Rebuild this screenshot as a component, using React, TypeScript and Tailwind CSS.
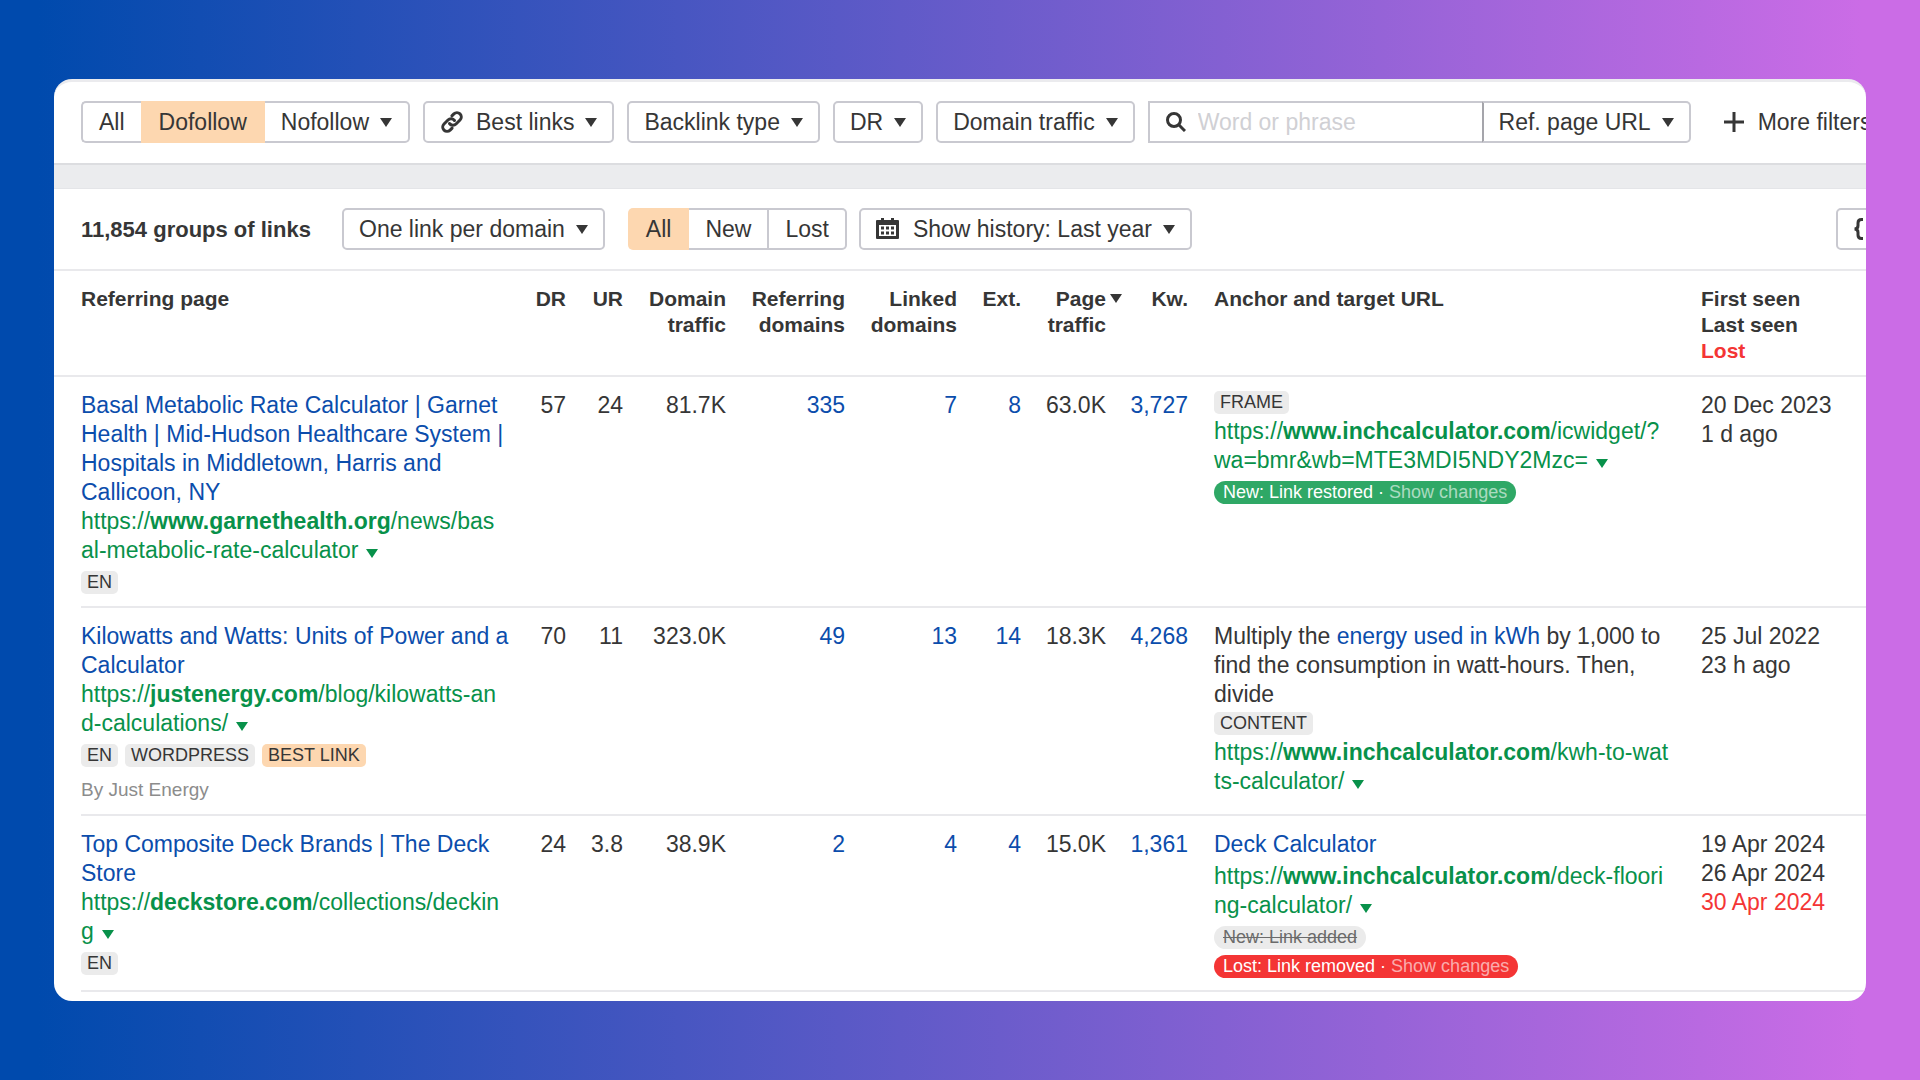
import type { ReactNode } from "react";
import clsx from "clsx";

const box = "flex h-[42px] shrink-0 items-center border-2 border-[#c9c9d0] bg-white whitespace-nowrap";
const button = `${box} rounded-[5px] px-[15px]`;
const segment = `${box} px-4`;
const activeSegment = "flex h-[42px] items-center bg-[#fdd7b0]";

type Row = {
  title: ReactNode;
  url: ReactNode;
  tags: { label: string; best?: boolean }[];
  author?: string;
  numbers: string[];
  anchor: ReactNode;
  dates: string[];
  lost?: string;
};

const rows: Row[] = [
  {
    title: (
      <>
        Basal Metabolic Rate Calculator | Garnet
        <br />
        Health | Mid-Hudson Healthcare System |
        <br />
        Hospitals in Middletown, Harris and
        <br />
        Callicoon, NY
      </>
    ),
    url: (
      <>
        https://<b>www.garnethealth.org</b>/news/bas
        <br />
        al-metabolic-rate-calculator
      </>
    ),
    tags: [{ label: "EN" }],
    numbers: ["57", "24", "81.7K", "335", "7", "8", "63.0K", "3,727"],
    anchor: (
      <>
        <div className="flex pb-[3px]">
          <Tag>FRAME</Tag>
        </div>
        <Url>
          https://<b>www.inchcalculator.com</b>/icwidget/?
          <br />
          wa=bmr&amp;wb=MTE3MDI5NDY2Mzc=
        </Url>
        <Status className="bg-[#2fa866] text-white">
          New: Link restored <ShowChanges />
        </Status>
      </>
    ),
    dates: ["20 Dec 2023", "1 d ago"],
  },
  {
    title: (
      <>
        Kilowatts and Watts: Units of Power and a
        <br />
        Calculator
      </>
    ),
    url: (
      <>
        https://<b>justenergy.com</b>/blog/kilowatts-an
        <br />
        d-calculations/
      </>
    ),
    tags: [{ label: "EN" }, { label: "WORDPRESS" }, { label: "BEST LINK", best: true }],
    author: "By Just Energy",
    numbers: ["70", "11", "323.0K", "49", "13", "14", "18.3K", "4,268"],
    anchor: (
      <>
        <p>
          Multiply the{" "}
          <a href="#anchor" className="text-[#0b4dac]">
            energy used in kWh
          </a>{" "}
          by 1,000 to
          <br />
          find the consumption in watt-hours. Then,
          <br />
          divide
        </p>
        <div className="flex py-[3px]">
          <Tag>CONTENT</Tag>
        </div>
        <Url>
          https://<b>www.inchcalculator.com</b>/kwh-to-wat
          <br />
          ts-calculator/
        </Url>
      </>
    ),
    dates: ["25 Jul 2022", "23 h ago"],
  },
  {
    title: (
      <>
        Top Composite Deck Brands | The Deck
        <br />
        Store
      </>
    ),
    url: (
      <>
        https://<b>deckstore.com</b>/collections/deckin
        <br />g
      </>
    ),
    tags: [{ label: "EN" }],
    numbers: ["24", "3.8", "38.9K", "2", "4", "4", "15.0K", "1,361"],
    anchor: (
      <>
        <a href="#anchor" className="block pb-[3px] text-[#0b4dac]">
          Deck Calculator
        </a>
        <Url>
          https://<b>www.inchcalculator.com</b>/deck-floori
          <br />
          ng-calculator/
        </Url>
        <Status className="bg-[#ebebeb] text-[#6b6b6b] line-through">New: Link added</Status>
        <Status className="bg-[#f43535] text-white">
          Lost: Link removed <ShowChanges />
        </Status>
      </>
    ),
    dates: ["19 Apr 2024", "26 Apr 2024"],
    lost: "30 Apr 2024",
  },
];

// Ref. domains, linked domains, ext. and kw. open a report of their own
const linkedColumns = [3, 4, 5, 7];

export default function App() {
  return (
    <div className="min-h-screen bg-linear-to-r/srgb from-[#004aad] from-2% to-[#cb6ce6] to-97% px-[54px] py-[79px] font-['Liberation_Sans',Arial,sans-serif] text-[23px] leading-[29px] text-[#363636]">
      <main className="overflow-hidden rounded-[18px] border-t-[3px] border-[#ebebee] bg-white">
        <Filters />
        <div className="h-[26px] border-t-2 border-b border-t-[#dcdde0] border-b-[#e4e5e8] bg-[#ebecee]" />
        <Toolbar />
        <BacklinksTable />
      </main>
    </div>
  );
}

function Filters() {
  return (
    <div className="flex gap-[13px] pt-[19px] pb-5 pl-[27px]">
      <div className="flex shrink-0">
        <button className={clsx(segment, "rounded-l-[5px] border-r-0")}>All</button>
        <button className={clsx(activeSegment, "px-[18px]")}>Dofollow</button>
        <button className={clsx(segment, "rounded-r-[5px] border-l-0")}>
          Nofollow
          <Caret />
        </button>
      </div>
      <button className={button}>
        <LinkIcon />
        Best links
        <Caret />
      </button>
      <button className={button}>
        Backlink type
        <Caret />
      </button>
      <button className={button}>
        DR
        <Caret />
      </button>
      <button className={button}>
        Domain traffic
        <Caret />
      </button>
      <div className="flex w-[543px] shrink-0">
        <label className="flex h-[42px] min-w-0 flex-1 items-center gap-3 border-2 border-r-0 border-[#c9c9d0] pl-4">
          <SearchIcon />
          <input
            type="text"
            aria-label="Word or phrase"
            placeholder="Word or phrase"
            className="w-full min-w-0 outline-none placeholder:text-[#d0d0d4]"
          />
        </label>
        <button className={clsx(box, "rounded-r-[5px] border-l-[#a5a5ab] px-[15px]")}>
          Ref. page URL
          <Caret />
        </button>
      </div>
      <button className="ml-5 flex shrink-0 items-center gap-[14px] whitespace-nowrap">
        <svg viewBox="0 0 20 20" className="size-5" stroke="#363636" strokeWidth="3">
          <path d="M10 0v20M0 10h20" />
        </svg>
        More filters
      </button>
    </div>
  );
}

function Toolbar() {
  return (
    <div className="flex items-center border-b-2 border-[#e9e9ec] py-[19px] pl-[27px]">
      <h1 className="w-[261px] shrink-0 text-[22px] font-bold whitespace-nowrap">11,854 groups of links</h1>
      <button className={button}>
        One link per domain
        <Caret />
      </button>
      <div className="ml-[23px] flex shrink-0">
        <button className={clsx(activeSegment, "rounded-l-[5px] px-[18px]")}>All</button>
        <button className={clsx(segment, "border-l-0")}>New</button>
        <button className={clsx(segment, "rounded-r-[5px] border-l-0")}>Lost</button>
      </div>
      <button className={clsx(button, "ml-3")}>
        <CalendarIcon />
        Show history: Last year
        <Caret />
      </button>
      <button aria-label="API" className={clsx(button, "-mr-10 ml-auto w-[70px]")}>
        <BracesIcon />
      </button>
    </div>
  );
}

function BacklinksTable() {
  return (
    <table className="mb-[9px] w-full table-fixed">
      <colgroup>
        <col className="w-[27px]" />
        <col className="w-[427px]" />
        <col className="w-[58px]" />
        <col className="w-[57px]" />
        <col className="w-[103px]" />
        <col className="w-[119px]" />
        <col className="w-[112px]" />
        <col className="w-[64px]" />
        <col className="w-[85px]" />
        <col className="w-[82px]" />
        <col className="w-[513px]" />
        <col />
      </colgroup>
      <thead>
        <tr className="border-b-2 border-[#e9e9ec] text-right align-top text-[21px] leading-[26px] *:pt-[15px] *:pb-[11px]">
          <td />
          <th scope="col" className="text-left">
            Referring page
          </th>
          <th scope="col">DR</th>
          <th scope="col">UR</th>
          <th scope="col">
            Domain
            <br />
            traffic
          </th>
          <th scope="col">
            Referring
            <br />
            domains
          </th>
          <th scope="col">
            Linked
            <br />
            domains
          </th>
          <th scope="col">Ext.</th>
          <th scope="col" aria-sort="descending">
            <button className="relative text-right font-bold">
              Page
              <br />
              traffic
              <span className="absolute top-2 left-full ml-1 border-x-[6px] border-t-[9px] border-x-transparent border-t-[#363636]" />
            </button>
          </th>
          <th scope="col">Kw.</th>
          <th scope="col" className="pl-[26px] text-left">
            Anchor and target URL
          </th>
          <th scope="col" className="text-left">
            First seen
            <br />
            Last seen
            <br />
            <span className="text-[#f43535]">Lost</span>
          </th>
        </tr>
      </thead>
      <tbody>
        {rows.map((row, i) => (
          <tr key={i} className="align-top *:pt-[14px] *:pb-3 *:not-first:border-b-2 *:not-first:border-[#e9e9ec]">
            <td />
            <td className="whitespace-nowrap">
              <a href="#page" className="block text-[#0b4dac]">
                {row.title}
              </a>
              <Url>{row.url}</Url>
              <div className="flex gap-[7px] pt-[6px]">
                {row.tags.map((tag) => (
                  <Tag key={tag.label} best={tag.best}>
                    {tag.label}
                  </Tag>
                ))}
              </div>
              {row.author && <p className="pt-[11px] text-[19px] leading-6 text-[#8c8c8c]">{row.author}</p>}
            </td>
            {row.numbers.map((value, n) => (
              <td key={n} className="text-right">
                {linkedColumns.includes(n) ? (
                  <a href="#report" className="text-[#0b4dac]">
                    {value}
                  </a>
                ) : (
                  value
                )}
              </td>
            ))}
            <td className="pl-[26px] whitespace-nowrap">{row.anchor}</td>
            <td className="whitespace-nowrap">
              {row.dates.map((date) => (
                <div key={date}>{date}</div>
              ))}
              {row.lost && <div className="text-[#f43535]">{row.lost}</div>}
            </td>
          </tr>
        ))}
      </tbody>
    </table>
  );
}

function Url({ children }: { children: ReactNode }) {
  return (
    <a href="#url" className="block text-[#08914a]">
      {children}
      <span className="ml-2 inline-block border-x-[6px] border-t-[9px] border-x-transparent border-t-[#08914a]" />
    </a>
  );
}

function Tag({ children, best }: { children: ReactNode; best?: boolean }) {
  return (
    <span className={clsx("rounded-[5px] px-[6px] text-[18px] leading-[23px]", best ? "bg-[#fdd7b0]" : "bg-[#ebebeb]")}>
      {children}
    </span>
  );
}

function Status({ children, className }: { children: ReactNode; className: string }) {
  return (
    <div className="flex pt-[6px]">
      <span className={clsx("rounded-full px-[9px] text-[18px] leading-[23px]", className)}>{children}</span>
    </div>
  );
}

function ShowChanges() {
  return (
    <>
      ·{" "}
      <a href="#changes" className="text-white/60">
        Show changes
      </a>
    </>
  );
}

function Caret() {
  return <span className="ml-[11px] border-x-[6px] border-t-[9px] border-x-transparent border-t-[#363636]" />;
}

function LinkIcon() {
  return (
    <svg
      viewBox="0 0 24 24"
      className="mr-3 size-6"
      fill="none"
      stroke="#363636"
      strokeWidth="3"
      strokeLinecap="round"
      strokeLinejoin="round"
    >
      <path d="M9.500 13.500a4.300 4.300 0 0 0 6.500.5l4-4a4.300 4.300 0 0 0-6.100-6.100l-2 2" />
      <path d="M14.500 10.500a4.300 4.300 0 0 0-6.500-.5l-4 4a4.300 4.300 0 0 0 6.100 6.100l2-2" />
    </svg>
  );
}

function SearchIcon() {
  return (
    <svg viewBox="0 0 20 20" className="size-5 shrink-0" fill="none" stroke="#363636" strokeWidth="3">
      <circle cx="8" cy="8" r="6.5" />
      <path d="M13 13l6 6" />
    </svg>
  );
}

function CalendarIcon() {
  return (
    <svg viewBox="0 0 23 22" className="mr-[14px] h-[22px] w-[23px]" fill="#363636">
      <path
        fillRule="evenodd"
        d="M5 0h3v2h7V0h3v2h4a1 1 0 0 1 1 1v17a1 1 0 0 1-1 1H1a1 1 0 0 1-1-1V3a1 1 0 0 1 1-1h4zM3 7v11h17V7z"
      />
      <path d="M5 8.500h3v3H5zM10 8.500h3v3h-3zM15 8.500h3v3h-3zM5 13.500h3v3H5zM10 13.500h3v3h-3zM15 13.500h3v3h-3z" />
    </svg>
  );
}

function BracesIcon() {
  return (
    <svg viewBox="0 0 28 22" className="h-[22px] w-7" fill="none" stroke="#363636" strokeWidth="3">
      <path d="M10 1.500H8.500Q5 1.500 5 5v2.500Q5 11 1.500 11 5 11 5 14.500V17q0 3.500 3.500 3.500H10" />
      <path d="M18 1.500h1.500Q23 1.500 23 5v2.500q0 3.500 3.500 3.500-3.500 0-3.500 3.500V17q0 3.500-3.500 3.500H18" />
    </svg>
  );
}
